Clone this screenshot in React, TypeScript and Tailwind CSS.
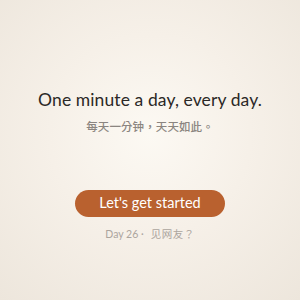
export default function App() {
  return (
    <div className="w-[300px] h-[300px] bg-[radial-gradient(circle_at_50%_45%,#fcf9f3_0%,#f6f0e8_45%,#ede6dc_100%)] flex flex-col items-center font-['Lato','Noto_Sans_CJK_TC',sans-serif]">
      <h1 className="mt-[89px] text-[17.5px] leading-[22px] text-[#2b2826] tracking-[0.1px]">
        One minute a day, every day.
      </h1>
      <p className="mt-[7px] text-[11.5px] leading-[16px] font-medium text-[#8b8580] font-['Noto_Sans_CJK_TC',sans-serif] tracking-[0.1px]">
        每天一分钟，天天如此。
      </p>
      <button className="mt-[56px] w-[150px] h-[27px] rounded-full bg-[#b9612f] text-white text-[14.5px] font-normal leading-none flex items-center justify-center">
        Let's get started
      </button>
      <div className="mt-[10px] flex items-center gap-[7px] text-[10.5px] leading-[14px] text-[#aca59e]">
        <span>Day 26 ·</span>
        <span className="font-['Noto_Sans_CJK_TC',sans-serif] tracking-[0.5px]">见网友？</span>
      </div>
    </div>
  );
}
